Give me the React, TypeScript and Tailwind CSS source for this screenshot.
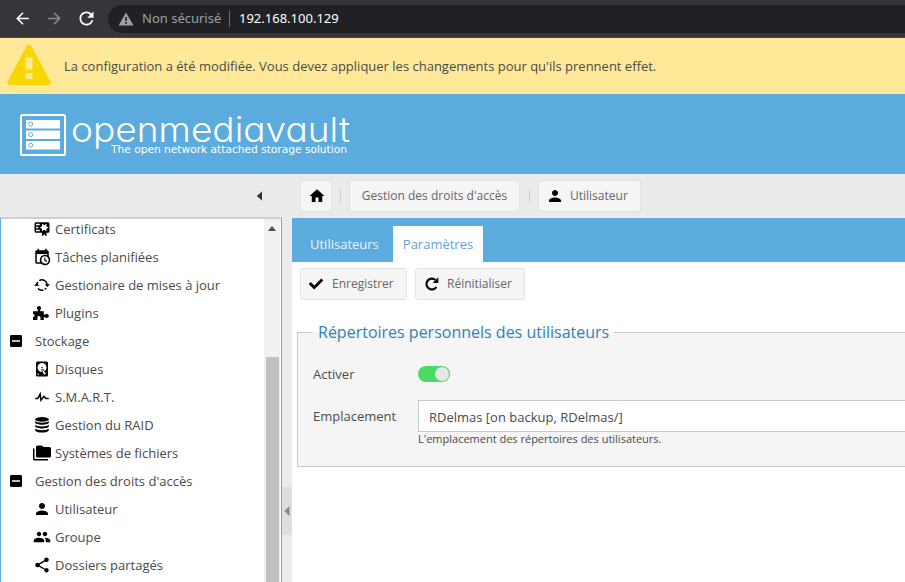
import React from "react";
import { MdPerson, MdPeople, MdShare, MdHome, MdArrowBack, MdArrowForward, MdRefresh } from "react-icons/md";
import { FaCheck } from "react-icons/fa";

const paths = {
  certificate:
    "M4,3C2.89,3 2,3.89 2,5V15A2,2 0 0,0 4,17H12V22L15,19L18,22V17H20A2,2 0 0,0 22,15V5A2,2 0 0,0 20,3H4M12,5L15,7L18,5V8.5L21,10L18,11.5V15L15,13L12,15V11.5L9,10L12,8.5V5M4,5H9V7H4V5M4,9H7V11H4V9M4,13H9V15H4V13Z",
  calendar:
    "M15,13H16.5V15.82L18.94,17.23L18.19,18.53L15,16.69V13M19,8H5V19H9.67C9.24,18.09 9,17.07 9,16A7,7 0 0,1 16,9C17.07,9 18.09,9.24 19,9.67V8M5,21C3.89,21 3,20.1 3,19V5C3,3.89 3.89,3 5,3H6V1H8V3H16V1H18V3H19A2,2 0 0,1 21,5V11.1C22.24,12.36 23,14.09 23,16A7,7 0 0,1 16,23C14.09,23 12.36,22.24 11.1,21H5M16,11.15A4.85,4.85 0 0,0 11.15,16C11.15,18.68 13.32,20.85 16,20.85A4.85,4.85 0 0,0 20.85,16C20.85,13.32 18.68,11.15 16,11.15Z",
  disk: "M6,2H18A2,2 0 0,1 20,4V20A2,2 0 0,1 18,22H6A2,2 0 0,1 4,20V4A2,2 0 0,1 6,2M12,4A6,6 0 0,0 6,10C6,13.31 8.69,16 12.1,16L11.22,13.77C10.95,13.29 11.11,12.68 11.59,12.4L12.45,11.9C12.93,11.63 13.54,11.79 13.82,12.27L15.74,14.69C17.12,13.59 18,11.9 18,10A6,6 0 0,0 12,4M12,9A1,1 0 0,1 13,10A1,1 0 0,1 12,11A1,1 0 0,1 11,10A1,1 0 0,1 12,9M7,18A1,1 0 0,0 6,19A1,1 0 0,0 7,20A1,1 0 0,0 8,19A1,1 0 0,0 7,18M12.09,13.27L14.58,19.58L17.17,18.08L12.95,12.77L12.09,13.27Z",
  pulse:
    "M3,13H5.79L10.1,4.79L11.28,13.75L14.5,9.66L17.83,13H21V15H17L14.67,12.67L9.92,18.73L8.94,11.31L7,15H3V13Z",
  folders:
    "M22,4H14L12,2H6A2,2 0 0,0 4,4V16A2,2 0 0,0 6,18H22A2,2 0 0,0 24,16V6A2,2 0 0,0 22,4M2,6H0V20A2,2 0 0,0 2,22H20V20H2V6Z",
  minus: "M18,13.2H6V10.8H18M19,3H5C3.89,3 3,3.89 3,5V19A2,2 0 0,0 5,21H19A2,2 0 0,0 21,19V5C21,3.89 20.1,3 19,3Z",
};

function Glyph({ d, size = 16 }: { d: string; size?: number }) {
  return (
    <svg width={size} height={size} viewBox="0 0 24 24" fill="black">
      <path d={d} fillRule="evenodd" />
    </svg>
  );
}

function UpdateIcon() {
  return (
    <svg width="16" height="16" viewBox="0 0 16 16" fill="none" stroke="black" strokeWidth="1.5">
      <path d="M2.8 8.5A5.2 5.2 0 0 1 3.8 4.9M5.2 3.6A5.2 5.2 0 0 1 13.2 7.6M12.2 11.1A5.2 5.2 0 0 1 10.8 12.4M9.4 13A5.2 5.2 0 0 1 4 11.6" />
      <path d="M0 8.8 2.7 6 5.4 8.8ZM16 7.2 13.3 10 10.6 7.2Z" fill="black" stroke="none" />
    </svg>
  );
}

function PuzzleIcon() {
  return (
    <svg width="16" height="16" viewBox="0 0 16 16" fill="black">
      <path d="M0 6.2H4.4C4.9 6.2 4.9 5.5 4.9 4.8A2 2 0 1 1 7.1 4.8C7.1 5.5 7.1 6.2 7.7 6.2H10.8V9.2C10.8 9.9 11.5 9.8 12.2 9.6A2 2 0 1 1 12.2 12.2C11.5 11.9 10.8 11.8 10.8 12.5V15H7.5V12.3A1.6 1.6 0 0 0 4.4 12.3V15H0V12.2L1.4 11.4V9.4L0 8.9Z" />
    </svg>
  );
}

function DatabaseIcon() {
  return (
    <svg width="14" height="16" viewBox="0 0 14 16" fill="black">
      <ellipse cx="7" cy="2.4" rx="6.8" ry="2.3" />
      <path d="M.2 4.1C2 6.3 12 6.3 13.8 4.1V5.6C13.8 8.5 .2 8.5 .2 5.6ZM.2 7.8C2 10 12 10 13.8 7.8V9.3C13.8 12.2 .2 12.2 .2 9.3ZM.2 11.5C2 13.7 12 13.7 13.8 11.5V13C13.8 16.4 .2 16.4 .2 13Z" />
    </svg>
  );
}

const items: { label: string; icon?: React.ReactNode }[] = [
  { label: "Certificats", icon: <Glyph d={paths.certificate} size={18} /> },
  { label: "Tâches planifiées", icon: <Glyph d={paths.calendar} size={18} /> },
  { label: "Gestionaire de mises à jour", icon: <UpdateIcon /> },
  { label: "Plugins", icon: <span className="mr-[2px]"><PuzzleIcon /></span> },
  { label: "Stockage" },
  { label: "Disques", icon: <Glyph d={paths.disk} size={18} /> },
  { label: "S.M.A.R.T.", icon: <Glyph d={paths.pulse} size={18} /> },
  { label: "Gestion du RAID", icon: <DatabaseIcon /> },
  { label: "Systèmes de fichiers", icon: <Glyph d={paths.folders} size={18} /> },
  { label: "Gestion des droits d'accès" },
  { label: "Utilisateur", icon: <MdPerson size={18} /> },
  { label: "Groupe", icon: <MdPeople size={18} /> },
  { label: "Dossiers partagés", icon: <MdShare size={18} /> },
];

function TreeRow({ label, icon }: { label: string; icon?: React.ReactNode }) {
  return icon ? (
    <div className="flex h-7 shrink-0 items-center pl-8 text-black">
      <span className="flex w-[18px] shrink-0 justify-center">{icon}</span>
      <span className="ml-1 pt-[2px] text-[13px] text-[#4a4a4a]">{label}</span>
    </div>
  ) : (
    <div className="flex h-7 shrink-0 items-center pl-[7px]">
      <Glyph d={paths.minus} size={16} />
      <span className="ml-[11px] pt-[2px] text-[13px] text-[#4a4a4a]">{label}</span>
    </div>
  );
}

function BrowserBar() {
  return (
    <div className="flex h-[38px] shrink-0 items-center border-b border-[#46474a] bg-[#35363a] pl-[13px]">
      <MdArrowBack size={19} className="text-white" />
      <MdArrowForward size={19} className="ml-[13px] text-[#88898c]" />
      <MdRefresh size={21} className="ml-[12px] text-white" />
      <div className="ml-[11px] flex h-7 flex-1 items-center rounded-l-full bg-[#202124] pl-[10px] text-[13px]">
        <svg width="16" height="14" viewBox="0 0 16 14">
          <path d="M8 .6 15.5 13.4H.5Z" fill="#9aa0a6" />
          <path d="M7.2 5h1.7v4H7.2ZM7.2 10h1.7v1.7H7.2Z" fill="#202124" />
        </svg>
        <span className="ml-2 w-[80px] pt-px whitespace-nowrap text-[#9aa0a6]" style={{ fontFamily: "'Noto Sans', sans-serif" }}>
          Non sécurisé
        </span>
        <span className="ml-[7px] h-4 w-px bg-[#6c6f73]" />
        <span className="ml-[9px] pt-px text-white" style={{ fontFamily: "'Noto Sans', sans-serif" }}>
          192.168.100.129
        </span>
      </div>
    </div>
  );
}

function Logo() {
  return (
    <svg width="340" height="50" viewBox="18 110 340 50" fill="white">
      <rect x="21" y="115" width="44" height="40" rx="1.5" fill="none" stroke="white" strokeWidth="2" />
      {[120, 130.5, 141].map((y) => (
        <g key={y}>
          <rect x="26" y={y} width="34" height="8.5" />
          <circle cx="30.7" cy={y + 4.2} r="2" fill="none" stroke="#5cabdf" strokeWidth="1" />
        </g>
      ))}
      <text
        x="71"
        y="141.5"
        fontSize="34.5"
        textLength="279"
        lengthAdjust="spacingAndGlyphs"
        style={{ fontFamily: "Inter, sans-serif", fontWeight: 300, fontFeatureSettings: "'cv11'" }}
      >
        openmediavault
      </text>
      <text x="111" y="153.3" fontSize="10.7" textLength="236" style={{ fontFamily: "'DejaVu Sans', sans-serif" }}>
        The open network attached storage solution
      </text>
    </svg>
  );
}

const crumb = "flex h-8 items-center rounded-[3px] border border-[#e2e2e2] bg-[#f5f5f5] text-[12px] text-[#666]";

export default function App() {
  return (
    <div
      className="flex h-[582px] w-[905px] flex-col overflow-hidden bg-[#ebebeb] whitespace-nowrap"
      style={{ fontFamily: "'Open Sans', sans-serif" }}
    >
      <BrowserBar />
      <div className="flex h-14 shrink-0 items-center bg-[#ffe999] pl-[7px]">
        <svg width="44" height="42" viewBox="0 0 44 42" className="mb-[3px]">
          <path d="M22 3 41 38.5H3Z" fill="#f9d600" stroke="#f9d600" strokeWidth="5" strokeLinejoin="round" />
          <path d="M18.5 13.5h7v12h-7ZM18.5 29h7v6h-7Z" fill="#ffe999" />
        </svg>
        <span className="ml-[13px] pt-[2px] text-[13px] text-[#4a4a4a]">
          La configuration a été modifiée. Vous devez appliquer les changements pour qu'ils prennent effet.
        </span>
      </div>
      <header className="flex h-20 shrink-0 bg-[#5cabdf] pt-4 pl-[18px]">
        <Logo />
      </header>
      <div className="flex h-11 shrink-0 items-center pl-[256px]">
        <svg width="7" height="10" viewBox="0 0 7 10">
          <path d="M6 .5V9.5L.8 5Z" fill="#333" />
        </svg>
        <div className={`${crumb} ml-[37px] w-8 justify-center pl-px`}>
          <MdHome size={18} className="text-black" />
        </div>
        <span className="ml-2 h-[14px] w-px bg-[#ccc]" />
        <div className={`${crumb} ml-2 w-[171px] justify-center`}>Gestion des droits d'accès</div>
        <span className="ml-[9px] h-[14px] w-px bg-[#ccc]" />
        <div className={`${crumb} ml-2 w-[103px] pl-[7px]`}>
          <MdPerson size={18} className="text-black" />
          <span className="ml-[6px]">Utilisateur</span>
        </div>
      </div>
      <div className="flex min-h-0 flex-1">
        <aside className="-mt-px flex w-[282px] shrink-0 border-t-2 border-r border-l border-t-[#cfcfcf] border-r-[#5cabdf] border-l-[#5cabdf] bg-white pr-px">
          <div className="-mt-1 flex flex-1 flex-col">
            {items.map((item) => (
              <TreeRow key={item.label} {...item} />
            ))}
          </div>
          <div className="flex w-[16px] flex-col items-center bg-[#f1f1f1]">
            <svg width="8" height="5" viewBox="0 0 8 5" className="mt-[7px]">
              <path d="M4 0 8 5H0Z" fill="#505050" />
            </svg>
            <div className="mt-[126px] ml-px w-[13px] flex-1 bg-[#c1c1c1]" />
          </div>
        </aside>
        <div className="w-[10px] shrink-0 bg-[#ebebeb] pt-[269px]">
          <div className="flex h-12 items-center justify-end bg-[#dedede] pr-[2px]">
            <svg width="6" height="10" viewBox="0 0 6 10">
              <path d="M5.5 0V10L.3 5Z" fill="#888" />
            </svg>
          </div>
        </div>
        <main className="flex min-w-0 flex-1 flex-col bg-white">
          <div className="flex h-11 shrink-0 bg-[#5cabdf] pt-2 text-[13px]">
            <div className="flex w-[101px] items-center pt-[2px] pl-[18px] text-[#e9f4fb]">Utilisateurs</div>
            <div className="flex w-[90px] items-center justify-center bg-white pt-[2px] text-[#5fa2dd]">Paramètres</div>
          </div>
          <div className="flex gap-2 pt-1.5 pl-2">
            <div className={`${crumb} w-[107px] pl-2`}>
              <FaCheck size={14} className="text-black" />
              <span className="ml-[9px]">Enregistrer</span>
            </div>
            <div className={`${crumb} w-[110px] pl-2`}>
              <svg width="16" height="16" viewBox="0 0 16 16">
                <path d="M11.4 4A5.4 5.4 0 1 0 12.4 11" fill="none" stroke="black" strokeWidth="2.2" />
                <path d="M14.3 1.3V6.9H8.7Z" fill="black" />
              </svg>
              <span className="ml-[7px]">Réinitialiser</span>
            </div>
          </div>
          <fieldset className="-mr-1 mt-[18px] ml-[5px] h-[149px] border border-[#c9c9c9] bg-[#f5f5f5] pl-[15px]">
            <legend className="h-[28px] px-[5px] text-[16px] leading-[28px] text-[#2e83b8]">
              Répertoires personnels des utilisateurs
            </legend>
            <div className="mt-3 flex h-8 items-center text-[13px] text-[#4a4a4a]">
              <span className="w-[105px] pt-[2px]">Activer</span>
              <span className="flex h-4 w-8 items-center justify-end rounded-full bg-[#4cd964] pr-px">
                <span className="h-[14px] w-[14px] rounded-full bg-[#e6e6e6]" />
              </span>
            </div>
            <div className="mt-[10px] flex h-8 items-center text-[13px] text-[#4a4a4a]">
              <span className="w-[105px] pt-[2px]">Emplacement</span>
              <div className="flex h-8 flex-1 items-center border border-[#c9c9c9] bg-white pt-[4px] pl-[10px]">
                RDelmas [on backup, RDelmas/]
              </div>
            </div>
            <div className="-mt-px pl-[105px] text-[11px] leading-[15px] text-[#4a4a4a]">
              L'emplacement des répertoires des utilisateurs.
            </div>
          </fieldset>
        </main>
      </div>
    </div>
  );
}
